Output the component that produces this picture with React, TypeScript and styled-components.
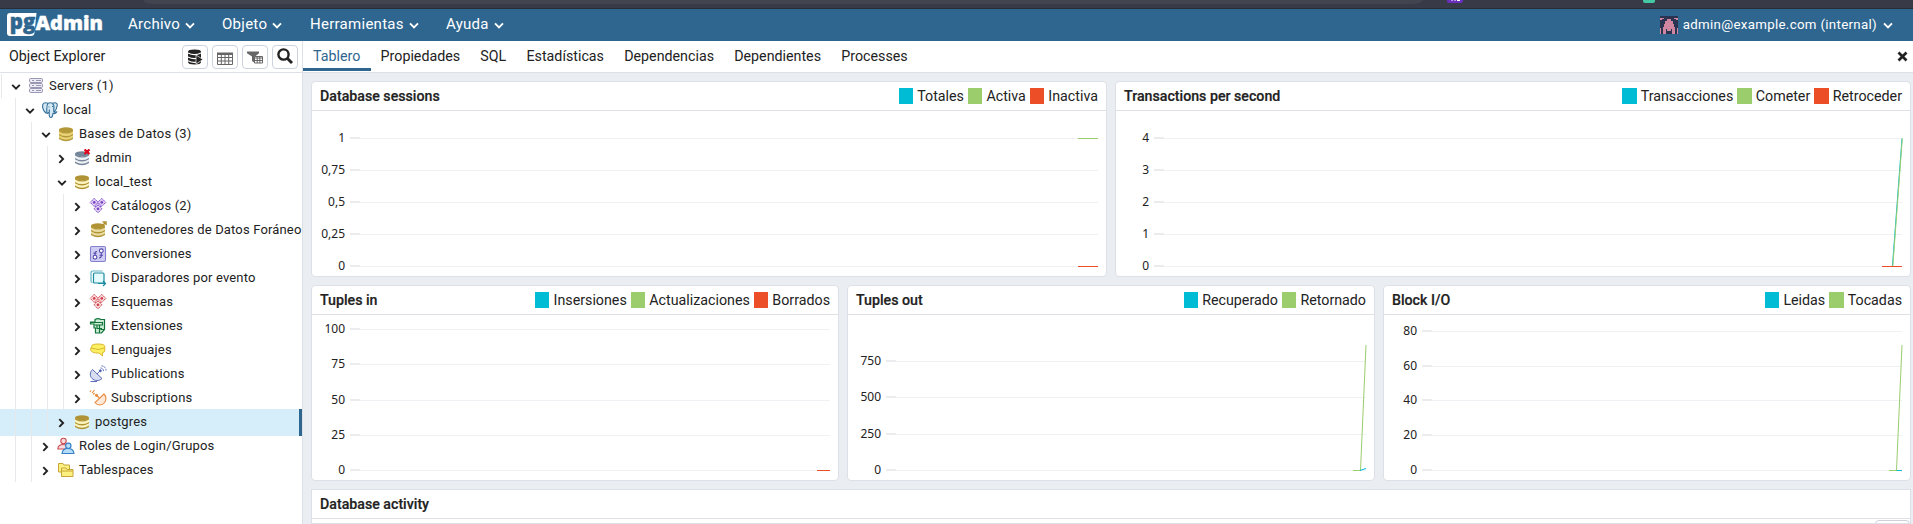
import React from 'react';
import styled, { createGlobalStyle } from 'styled-components';

const Global = createGlobalStyle`
  *, *::before, *::after { box-sizing: border-box; }
  html, body { margin: 0; padding: 0; overflow: hidden; background: #fff; }
  body { font-family: Roboto, "Liberation Sans", sans-serif; color: #222; font-size: 14.25px; }
`;

const Page = styled.div`
  height: 524px;
  width: 100%;
  display: flex;
  flex-direction: column;
  overflow: hidden;
`;

const BrowserStrip = styled.div`
  height: 9px;
  flex: none;
  display: flex;
  background: #383a47;
  border-bottom: 1px solid #2a2c37;
  padding-left: 143px;
`;
const AddressBar = styled.div`
  width: 1280px;
  height: 4px;
  background: #42444f;
  border-radius: 0 0 10px 10px / 0 0 4px 4px;
`;
const BrowserBadge = styled.div<{ $bg: string; $w: number; $ml: number }>`
  width: ${p => p.$w}px;
  height: 3px;
  margin-left: ${p => p.$ml}px;
  background: ${p => p.$bg};
  border-radius: 0 0 2px 2px;
  svg { display: block; }
`;

const MenuBar = styled.header`
  height: 32px;
  flex: none;
  display: flex;
  align-items: center;
  background: #2f668f;
  color: #fff;
  padding: 0 20px 0 6px;
`;
const MenuItem = styled.div<{ $w: number }>`
  width: ${p => p.$w}px;
  display: flex;
  align-items: center;
  gap: 5px;
  font-size: 15px;
  line-height: 20px;
  letter-spacing: 0.27px;
  margin-top: -2px;
  white-space: nowrap;
  svg { margin-top: 3px; }
`;
const Menus = styled.nav`
  display: flex;
  margin-left: 24px;
  flex: 1;
`;
const User = styled.div`
  display: flex;
  align-items: center;
  font-size: 13.3px;
  letter-spacing: 0.31px;
  white-space: nowrap;
  span { margin: -1px 6px 0 5px; }
`;

const Body = styled.div`
  flex: 1;
  min-height: 0;
  display: flex;
`;
const Sidebar = styled.aside`
  width: 303px;
  flex: none;
  border-right: 1px solid #dde0e6;
  display: flex;
  flex-direction: column;
  overflow: hidden;
`;
const SideHead = styled.div`
  height: 32px;
  flex: none;
  display: flex;
  align-items: center;
  gap: 4px;
  padding: 0 4px 0 9px;
  border-bottom: 1px solid #dde0e6;
`;
const SideTitle = styled.div`
  flex: 1;
  margin-top: -1px;
`;
const ToolButton = styled.button<{ $shift?: number }>`
  width: 26px;
  height: 24px;
  padding: 0;
  display: flex;
  align-items: center;
  justify-content: center;
  border: 1px solid #cdd2dc;
  border-radius: 4px;
  background: #fff;
  svg { margin-top: ${p => p.$shift ?? 0}px; }
`;

const Tree = styled.div`
  padding-top: 1px;
`;
const Row = styled.div<{ $root?: boolean; $selected?: boolean }>`
  height: ${p => (p.$selected ? 27 : 24)}px;
  margin: ${p => (p.$selected ? '-1px 0 -2px' : '0')};
  padding-bottom: ${p => (p.$selected ? 1 : 0)}px;
  padding-left: ${p => (p.$root ? 1 : 0)}px;
  display: flex;
  align-items: center;
  background: ${p => (p.$selected ? '#d5eefa' : 'transparent')};
  border-right: ${p => (p.$selected ? '3px solid #2f668f' : '0')};
  white-space: nowrap;
`;
const Guide = styled.span<{ $first?: boolean }>`
  width: ${p => (p.$first ? 15 : 16)}px;
  flex: none;
  align-self: stretch;
  border-left: 1px solid ${p => (p.$first ? 'transparent' : '#e6e8ec')};
`;
const GuideEdge = styled.span`
  width: 1px;
  margin-right: -1px;
  flex: none;
  align-self: stretch;
  background: #e6e8ec;
`;
const Toggle = styled.span<{ $open?: boolean }>`
  width: 12px;
  flex: none;
  display: flex;
  justify-content: center;
  margin: 2px 5px 0 9px;
  padding-right: ${p => (p.$open ? 0 : 1)}px;
`;
const NodeIcon = styled.span`
  width: 18px;
  height: 18px;
  flex: none;
  margin-right: 4px;
  svg { display: block; }
`;
const NodeLabel = styled.span`
  font-size: 13px;
  letter-spacing: 0.16px;
  margin-top: -2px;
`;

const Main = styled.main`
  flex: 1;
  min-width: 0;
  display: flex;
  flex-direction: column;
`;
const Tabs = styled.div`
  height: 32px;
  flex: none;
  display: flex;
  align-items: flex-start;
  border-bottom: 1px solid #dde0e6;
  padding-right: 5px;
`;
const Tab = styled.div<{ $active?: boolean }>`
  height: 30px;
  padding: 6px 10.1px 0;
  line-height: 18px;
  border-bottom: 3px solid ${p => (p.$active ? '#2f668f' : 'transparent')};
  color: ${p => (p.$active ? '#2f668f' : '#222')};
`;
const TabClose = styled.div`
  margin: 10px 0 0 auto;
  svg { display: block; }
`;
const Dashboard = styled.div`
  flex: 1;
  min-height: 0;
  background: #eaedf2;
  padding: 8px 2px 0 8px;
  display: flex;
  flex-direction: column;
  gap: 8px;
`;
const Charts = styled.div<{ $cols: number }>`
  display: grid;
  grid-template-columns: repeat(${p => p.$cols}, 1fr);
  gap: 8px;
`;
const Panel = styled.section<{ $open?: boolean }>`
  height: ${p => (p.$open ? 60 : 196)}px;
  border: 1px solid #dde0e8;
  border-radius: ${p => (p.$open ? '0' : '4px')};
  background: #fff;
  overflow: hidden;
`;
const PanelHead = styled.div`
  height: 29px;
  display: flex;
  align-items: center;
  justify-content: space-between;
  padding: 0 8px;
  border-bottom: 1px solid #dde0e6;
`;
const PanelTitle = styled.div`
  font-size: 14.2px;
  font-weight: 500;
  -webkit-text-stroke: 0.2px #222;
`;
const Legend = styled.div`
  display: flex;
  gap: 3.8px;
`;
const LegendItem = styled.div<{ $color: string }>`
  display: flex;
  align-items: center;
  gap: 4.2px;
  line-height: 18px;
  &::before {
    content: '';
    width: 14.5px;
    height: 16px;
    background: ${p => p.$color};
  }
`;
const PanelButtons = styled.div`
  display: flex;
  justify-content: flex-end;
  padding-top: 1px;
  > span {
    width: 35px;
    height: 24px;
    border: 1px solid #cdd2dc;
    border-radius: 4px;
  }
`;
const Plot = styled.svg`
  display: block;
`;
const AxisText = styled.text`
  font-family: "Noto Sans", sans-serif;
  font-size: 12px;
  fill: #222;
  text-anchor: end;
`;

const CYAN = '#00bcd4';
const GREEN = '#9bcd6c';
const RED = '#ec4e28';

function Chevron({ color = '#222', size = 10 }: { color?: string; size?: number }) {
  return (
    <svg width={size} height={size * 0.7} viewBox="0 0 10 7">
      <path d="M1 1.3 L5 5.3 L9 1.3" fill="none" stroke={color} strokeWidth="1.9" />
    </svg>
  );
}

function Arrow({ open }: { open?: boolean }) {
  return open ? (
    <svg width="10" height="8" viewBox="0 0 10 8">
      <path d="M1.2 1.8 L5 5.6 L8.8 1.8" fill="none" stroke="#222" strokeWidth="1.9" />
    </svg>
  ) : (
    <svg width="7" height="10" viewBox="0 0 7 10">
      <path d="M1.3 1.2 L5.1 5 L1.3 8.8" fill="none" stroke="#222" strokeWidth="1.9" />
    </svg>
  );
}

function Logo() {
  return (
    <svg width="98" height="26" viewBox="0 0 98 26" overflow="visible">
      <path d="M4 1 H30.500 L28.500 21 Q28 24 25 24 H4 Q1 24 1 21 V4 Q1 1 4 1Z" fill="#fff" />
      <text x="3.800" y="17.300" fontFamily="Open Sans" fontWeight="800" fontSize="21" fill="#2f668f" stroke="#2f668f" strokeWidth=".5" textLength="25.500" lengthAdjust="spacingAndGlyphs">pg</text>
      <text x="29.500" y="18.300" fontFamily="Open Sans" fontWeight="800" fontSize="19" fill="#fff" stroke="#fff" strokeWidth=".4" textLength="67.500" lengthAdjust="spacingAndGlyphs">Admin</text>
    </svg>
  );
}

function Avatar() {
  return (
    <svg width="18" height="18" viewBox="0 0 18 18" shapeRendering="crispEdges">
      <rect width="18" height="18" fill="#2a3450" />
      <path d="M0 2h4v1h-2v1h-2zM14 2h4v2h-2v-1h-2zM7 3h4v2h2v3h1v3h1v7h-3v-5h-6v5h-3v-7h1v-3h1v-3h2zM7 13h4v2h-4z" fill="#cf86a0" />
      <path d="M0 12h1v6h-1zM17 12h1v6h-1z" fill="#cf86a0" />
    </svg>
  );
}

function DbIcon({ dark, mid }: { dark: string; mid: string }) {
  const band = (y: number) => `M2 ${y} Q9 ${y + 4.4} 16 ${y} V${y + 1.4} Q9 ${y + 5.8} 2 ${y + 1.4}Z`;
  return (
    <g>
      <path d="M2 5 V13.500 Q9 17.500 16 13.500 V5Z" fill={mid} />
      <ellipse cx="9" cy="4.800" rx="7" ry="2.500" fill={dark} />
      <path d={band(5)} fill={dark} />
      <path d={band(8.9)} fill={dark} />
      <path d={band(12.6)} fill={dark} />
    </g>
  );
}

function Diamonds({ c, bg }: { c: string; bg: string }) {
  const centres = [[5.2, 5.4], [12.8, 5.4], [9, 11.8]];
  return (
    <g>
      <path d="M9 4.500 L12.500 8.300 L9 12 L5.500 8.300Z" fill={bg} stroke={c} />
      {centres.map(([x, y]) => (
        <g key={`${x}-${y}`}>
          <path
            d={`M${x} ${y - 4} L${x + 4} ${y} L${x} ${y + 4} L${x - 4} ${y}Z`}
            fill={bg}
            stroke={c}
            strokeDasharray="1.600 .5"
          />
          <circle cx={x} cy={y} r="1.400" fill={c} />
        </g>
      ))}
    </g>
  );
}

function TreeIcon({ kind }: { kind: string }) {
  let body: React.ReactNode = null;
  switch (kind) {
    case 'servers':
      body = (
        <g fill="#eeedf5" stroke="#9a97b5" strokeWidth="1">
          {[1.5, 6.5, 11.5].map(y => (
            <g key={y}>
              <rect x="2.500" y={y} width="13" height="4" rx="1.300" />
              <path d={`M5 ${y + 2}h2M9 ${y + 2}h5`} />
            </g>
          ))}
        </g>
      );
      break;
    case 'pg':
      body = (
        <g fill="#d5e8f4" stroke="#336f99" strokeWidth="1.100" strokeLinejoin="round">
          <path d="M5.500 12.500 C2.500 10.500 1 6 1.800 3.500 C2.800 1.500 5 1.500 7 2.300 C9 1.400 10.500 1.600 11.500 2.300 C14 1.200 16.500 2 16.300 4.200 C16 7 14.800 9.300 13 11 C14.500 11.300 15.300 11 16 10.800 C15 12.500 13.300 12.800 12 12.300 C11.800 14.500 11.800 16.500 9.800 16.500 C8 16.500 8.200 14 8.200 11.500" />
          <path d="M7 2.300 C5.500 4 5.800 7 5.800 9 C5.600 11 6 12.500 6.800 12.300 L8.200 11.300 M11.500 2.300 C13.200 4 13.200 6 12.800 8 C12.600 9.500 12.700 10.500 13 11 M7.500 6 h1 M11 5.500 h1 M8.300 8.500v3" fill="none" />
        </g>
      );
      break;
    case 'db':
      body = <DbIcon dark="#b09335" mid="#fdf5c0" />;
      break;
    case 'dbs':
      body = <DbIcon dark="#b3983a" mid="#e9d376" />;
      break;
    case 'dboff':
      body = (
        <g>
          <DbIcon dark="#75859a" mid="#eef1f4" />
          <path d="M11.500 .5 L16.500 5 M16.500 .5 L11.500 5" stroke="#e2001a" strokeWidth="2.200" />
        </g>
      );
      break;
    case 'fdw':
      body = (
        <g>
          <DbIcon dark="#b09335" mid="#e9dca0" />
          <path d="M13 5 L17 1 M13.500 1 H17 V4" stroke="#b09335" strokeWidth="1.500" fill="none" />
        </g>
      );
      break;
    case 'catalog':
      body = <Diamonds c="#7d45c4" bg="#e2d5f6" />;
      break;
    case 'schema':
      body = <Diamonds c="#d04450" bg="#fadfdf" />;
      break;
    case 'conv':
      body = (
        <g fill="none" stroke="#5648ad" strokeWidth="1.100">
          <rect x="1.500" y="1.500" width="15" height="15" rx="1.500" fill="#cfcdf3" stroke="#8580cd" />
          <path d="M8 6.500 Q6 6.300 6 8.500 V10 M4.300 8.300 H7.500 M12.300 8 V10.500 Q12.300 13 10 13 M10.500 10.300 H14" />
          <circle cx="12.300" cy="5.800" r="1.900" fill="#fff" />
          <circle cx="6" cy="12.200" r="1.900" fill="#fff" />
        </g>
      );
      break;
    case 'trigger':
      body = (
        <g fill="none" stroke="#1b8ba0" strokeWidth="1.200">
          <path d="M13.500 2 H4 Q2 2 2 4 V12 Q2 13.500 3.500 13.500" stroke="#5fb6c2" />
          <rect x="4.500" y="4" width="10.500" height="10" rx="1" fill="#e6fbfc" />
          <path d="M9 14.500 H16.500 M14 12 L16.500 14.500 L14 17" />
        </g>
      );
      break;
    case 'ext':
      body = (
        <g fill="#cdeed6" stroke="#13733a" strokeWidth="1.200">
          <path d="M6 2.500 Q9 .8 12 2.500 H15.500 V12.500 L12.500 16 H6.500 V11 H5 V7 H1.500 V5 H6Z" />
          <path d="M1.500 5.500 H13.500 V8 H5.500 M8 8 V11.500 H13 M10.500 8 V16 M15 12.500 H11.500" fill="none" />
        </g>
      );
      break;
    case 'lang':
      body = (
        <g fill="#fbef62" stroke="#dcb82f" strokeWidth="1">
          <path d="M2.500 5.500 Q2.500 3 9 3 Q15.800 3 15.800 5.500 V9 Q15.800 11.500 13.500 11.700 L13.500 15 L10 12 Q2.500 12.500 1.500 8.500 Z" />
          <path d="M2 7 Q9 10 15.800 7" fill="none" />
        </g>
      );
      break;
    case 'pub':
      body = (
        <g fill="#d9ddf2" stroke="#5a6bb8" strokeWidth="1">
          <path d="M3.500 4.500 L13 13.500 C10 16.500 5.500 16 3 13.500 C.5 11 .8 7 3.500 4.500Z" />
          <path d="M8 9 L11 6 M1.500 16.500 H8" fill="none" />
          <circle cx="11.300" cy="5.800" r="1" fill="#34459a" />
          <path d="M11.500 3 Q14.500 3.200 14.500 6.300 M12.500 .8 Q17 1.500 17 5.500" fill="none" strokeDasharray="2 .8" />
        </g>
      );
      break;
    case 'sub':
      body = (
        <g fill="#fdeadb" stroke="#ea8a3c" strokeWidth="1.100">
          <path d="M15 5 L6 13.500 C8.500 16.800 13 16.500 15.200 14 C17.500 11.500 17.500 7.500 15 5Z" />
          <path d="M10.500 9 L7.500 6.500" fill="none" />
          <circle cx="7.500" cy="6.300" r="1" fill="#ea8a3c" />
          <path d="M5.500 1 L3 4 M2 1.500 L1 3 M5.500 4 L4 5.500" fill="none" />
        </g>
      );
      break;
    case 'roles':
      body = (
        <g strokeWidth="1.100">
          <g fill="#fbdcdc" stroke="#c94b52">
            <path d="M.8 12 Q1 7.500 6.500 7.500 Q10 7.500 11 12Z" />
            <circle cx="6.500" cy="4" r="2.700" />
          </g>
          <g fill="#b5dcf8" stroke="#3580c4">
            <path d="M5 16.500 Q5.500 11.500 11 11.500 Q16.500 11.500 17 16.500Z" />
            <circle cx="11.300" cy="8.800" r="2.700" />
          </g>
        </g>
      );
      break;
    case 'tbs':
      body = (
        <g fill="#fbf180" stroke="#c9a436" strokeWidth="1">
          <path d="M1.500 2.500 H6 L7 4 H12.500 V11 H1.500Z" />
          <path d="M4.500 7 H9 L10 8.500 H16 V15.500 H4.500Z" />
          <path d="M4.500 10 H16" />
        </g>
      );
      break;
  }
  return <svg width="18" height="18" viewBox="0 0 18 18">{body}</svg>;
}

type Node = { label: string; icon: string; depth: number; open?: boolean; selected?: boolean };
const nodes: Node[] = [
  { label: 'Servers (1)', icon: 'servers', depth: 0, open: true },
  { label: 'local', icon: 'pg', depth: 1, open: true },
  { label: 'Bases de Datos (3)', icon: 'dbs', depth: 2, open: true },
  { label: 'admin', icon: 'dboff', depth: 3 },
  { label: 'local_test', icon: 'db', depth: 3, open: true },
  { label: 'Catálogos (2)', icon: 'catalog', depth: 4 },
  { label: 'Contenedores de Datos Foráneo', icon: 'fdw', depth: 4 },
  { label: 'Conversiones', icon: 'conv', depth: 4 },
  { label: 'Disparadores por evento', icon: 'trigger', depth: 4 },
  { label: 'Esquemas', icon: 'schema', depth: 4 },
  { label: 'Extensiones', icon: 'ext', depth: 4 },
  { label: 'Lenguajes', icon: 'lang', depth: 4 },
  { label: 'Publications', icon: 'pub', depth: 4 },
  { label: 'Subscriptions', icon: 'sub', depth: 4 },
  { label: 'postgres', icon: 'db', depth: 3, selected: true },
  { label: 'Roles de Login/Grupos', icon: 'roles', depth: 2 },
  { label: 'Tablespaces', icon: 'tbs', depth: 2 },
];

function TreeRow({ node }: { node: Node }) {
  const guides = [];
  for (let i = 0; i < node.depth; i++) {
    guides.push(<Guide key={i} $first={i === 0} />);
  }
  return (
    <Row $root={node.depth === 0} $selected={node.selected}>
      {guides}
      <GuideEdge />
      <Toggle $open={node.open}><Arrow open={node.open} /></Toggle>
      <NodeIcon><TreeIcon kind={node.icon} /></NodeIcon>
      <NodeLabel>{node.label}</NodeLabel>
    </Row>
  );
}

type Line = { color: string; points: string };
type ChartProps = {
  title: string;
  width: number;
  legend: [string, string][];
  ticks: [string, number][];
  lines: Line[];
};

function ChartPanel({ title, width, legend, ticks, lines }: ChartProps) {
  const right = width - 10;
  return (
    <Panel>
      <PanelHead>
        <PanelTitle>{title}</PanelTitle>
        <Legend>
          {legend.map(([name, color]) => <LegendItem key={name} $color={color}>{name}</LegendItem>)}
        </Legend>
      </PanelHead>
      <Plot width={width - 2} height="165" viewBox={`0 0 ${width - 2} 165`}>
        {ticks.map(([label, y]) => (
          <g key={label}>
            <AxisText x="33" y={y + 4}>{label}</AxisText>
            <rect x="38" y={y - 1} width="10" height="2" fill="#ececee" />
            <rect x="48" y={y} width={right - 48} height="1" fill="#f0f1f4" />
          </g>
        ))}
        <g transform={`translate(${right} 0)`}>
          {lines.map((l, i) => (
            <polyline key={i} points={l.points} fill="none" stroke={l.color} strokeWidth="1" />
          ))}
        </g>
      </Plot>
    </Panel>
  );
}

export default function App() {
  return (
    <Page>
      <Global />
      <BrowserStrip>
        <AddressBar />
        <BrowserBadge $bg="#6a2fbf" $w={16} $ml={24}>
          <svg width="16" height="3"><path d="M5 0v1M8 0v1M10 .5h3" stroke="#fff" /></svg>
        </BrowserBadge>
        <BrowserBadge $bg="#45c9a5" $w={12} $ml={180} />
      </BrowserStrip>
      <MenuBar>
        <Logo />
        <Menus>
          <MenuItem $w={94}>Archivo<Chevron color="#fff" /></MenuItem>
          <MenuItem $w={88}>Objeto<Chevron color="#fff" /></MenuItem>
          <MenuItem $w={136}>Herramientas<Chevron color="#fff" /></MenuItem>
          <MenuItem $w={70}>Ayuda<Chevron color="#fff" /></MenuItem>
        </Menus>
        <User>
          <Avatar />
          <span>admin@example.com (internal)</span>
          <Chevron color="#fff" />
        </User>
      </MenuBar>
      <Body>
        <Sidebar>
          <SideHead>
            <SideTitle>Object Explorer</SideTitle>
            <ToolButton $shift={1}>
              <svg width="16" height="16" viewBox="0 0 16 16">
                <path d="M1 2.800 Q1 .5 7.500 .5 Q14 .5 14 2.800 V13 Q14 15.500 7.500 15.500 Q1 15.500 1 13Z" fill="#222" />
                <path d="M1 4 Q7.500 7.300 14 4 M1 8 Q5 10 9 9.500 M1 11.800 Q5 13.800 9 13.300" stroke="#fff" strokeWidth="1.100" fill="none" />
                <path d="M9 6 L16 10.500 L9 15Z" fill="#222" stroke="#fff" strokeWidth=".7" />
              </svg>
            </ToolButton>
            <ToolButton $shift={3}>
              <svg width="16" height="16" viewBox="0 0 16 16">
                <path d="M.5 3.500 H15.500 V14.500 H.5Z M.5 7.500 H15.500 M.5 11 H15.500 M4.300 3.500 V14.500 M8 3.500 V14.500 M11.700 3.500 V14.500" fill="none" stroke="#666" />
                <path d="M0 2.500 H16 V5 H0Z" fill="#666" />
              </svg>
            </ToolButton>
            <ToolButton>
              <svg width="16" height="16" viewBox="0 0 16 16">
                <path d="M0 2.500 H12 V4.200 L8 7.500 V14 L5 12 V7.500 L0 4.200Z" fill="#666" />
                <path d="M7.500 7.500 H15.500 V14 H7.500Z" fill="#fff" stroke="#666" />
                <path d="M7.500 9 H15.500 M7.500 11.500 H15.500 M10.200 8 V14 M12.800 8 V14" stroke="#666" />
              </svg>
            </ToolButton>
            <ToolButton $shift={-2}>
              <svg width="16" height="16" viewBox="0 0 16 16">
                <circle cx="6.500" cy="6.500" r="5.100" fill="none" stroke="#222" strokeWidth="2.400" />
                <path d="M10.200 10.200 L15 15" stroke="#222" strokeWidth="2.900" />
              </svg>
            </ToolButton>
          </SideHead>
          <Tree>
            {nodes.map(n => <TreeRow key={n.label} node={n} />)}
          </Tree>
        </Sidebar>
        <Main>
          <Tabs>
            <Tab $active>Tablero</Tab>
            <Tab>Propiedades</Tab>
            <Tab>SQL</Tab>
            <Tab>Estadísticas</Tab>
            <Tab>Dependencias</Tab>
            <Tab>Dependientes</Tab>
            <Tab>Processes</Tab>
            <TabClose>
              <svg width="11" height="11" viewBox="0 0 11 11">
                <path d="M1.500 1.500 L9.500 9.500 M9.500 1.500 L1.500 9.500" stroke="#222" strokeWidth="2.700" />
              </svg>
            </TabClose>
          </Tabs>
          <Dashboard>
            <Charts $cols={2}>
              <ChartPanel
                title="Database sessions"
                width={796}
                legend={[['Totales', CYAN], ['Activa', GREEN], ['Inactiva', RED]]}
                ticks={[['1', 27], ['0,75', 59], ['0,5', 91], ['0,25', 123], ['0', 155]]}
                lines={[{ color: GREEN, points: '-20,27.5 0,27.5' }, { color: RED, points: '-20,155.5 0,155.5' }]}
              />
              <ChartPanel
                title="Transactions per second"
                width={796}
                legend={[['Transacciones', CYAN], ['Cometer', GREEN], ['Retroceder', RED]]}
                ticks={[['4', 27], ['3', 59], ['2', 91], ['1', 123], ['0', 155]]}
                lines={[
                  { color: CYAN, points: '-9.6,155.5 0,27.5' },
                  { color: GREEN, points: '-9.2,155.5 0.3,27.5' },
                  { color: RED, points: '-20,155.5 0,155.5' },
                ]}
              />
            </Charts>
            <Charts $cols={3}>
              <ChartPanel
                title="Tuples in"
                width={528}
                legend={[['Insersiones', CYAN], ['Actualizaciones', GREEN], ['Borrados', RED]]}
                ticks={[['100', 14], ['75', 49], ['50', 85], ['25', 120], ['0', 155]]}
                lines={[{ color: RED, points: '-13,155.5 0,155.5' }]}
              />
              <ChartPanel
                title="Tuples out"
                width={528}
                legend={[['Recuperado', CYAN], ['Retornado', GREEN]]}
                ticks={[['750', 46], ['500', 82], ['250', 119], ['0', 155]]}
                lines={[
                  { color: GREEN, points: '-13,155.5 -5.5,155.5 0,30' },
                  { color: CYAN, points: '-6,155.5 0,153.5' },
                ]}
              />
              <ChartPanel
                title="Block I/O"
                width={528}
                legend={[['Leidas', CYAN], ['Tocadas', GREEN]]}
                ticks={[['80', 16], ['60', 51], ['40', 85], ['20', 120], ['0', 155]]}
                lines={[
                  { color: CYAN, points: '-6,155.5 0,155.5' },
                  { color: GREEN, points: '-13,155.5 -5.5,155.5 0,30' },
                ]}
              />
            </Charts>
            <Panel $open>
              <PanelHead><PanelTitle>Database activity</PanelTitle></PanelHead>
              <PanelButtons><span /></PanelButtons>
            </Panel>
          </Dashboard>
        </Main>
      </Body>
    </Page>
  );
}
